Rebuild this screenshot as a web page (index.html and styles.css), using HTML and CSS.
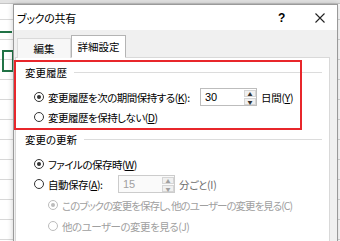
FILE: index.html
```html
<!DOCTYPE html>
<html lang="ja">
<head>
    <meta charset="UTF-8">
    <title>ブックの共有</title>
    <link rel="stylesheet" href="styles.css">
</head>
<body>
    <!-- 背景のシート -->
    <div class="sheet">
        <div class="sheet-top"></div>
        <div class="sheet-row-mark"></div>
        <div class="sheet-cell-sel"></div>
    </div>

    <!-- ダイアログ -->
    <div class="dialog">
        <div class="titlebar">
            <span class="title">ブックの共有</span>
            <span class="help">?</span>
            <span class="close">
                <svg width="10" height="10" viewBox="0 0 10 10">
                    <path d="M0.5 0.5 L9.5 9.5 M9.5 0.5 L0.5 9.5" stroke="#222" stroke-width="1.1" fill="none"/>
                </svg>
            </span>
        </div>

        <div class="dialog-body">
            <div class="tabs">
                <div class="tab">編集</div>
                <div class="tab active">詳細設定</div>
            </div>

            <div class="panel">
                <!-- 変更履歴 -->
                <div class="group-title"><span>変更履歴</span></div>
                <div class="row row-first">
                    <span class="radio checked"></span>
                    <span class="label w-keep">変更履歴を次の期間保持する(<u>K</u>):</span>
                    <span class="spin">
                        <span class="spin-value">30</span>
                        <span class="spin-btns">
                            <span class="spin-btn">▲</span>
                            <span class="spin-btn">▼</span>
                        </span>
                    </span>
                    <span class="after">日間(<u>Y</u>)</span>
                </div>
                <div class="row">
                    <span class="radio"></span>
                    <span class="label">変更履歴を保持しない(<u>D</u>)</span>
                </div>

                <!-- 変更の更新 -->
                <div class="group-title group-gap"><span>変更の更新</span></div>
                <div class="row row-first">
                    <span class="radio checked"></span>
                    <span class="label">ファイルの保存時(<u>W</u>)</span>
                </div>
                <div class="row">
                    <span class="radio"></span>
                    <span class="label w-auto">自動保存(<u>A</u>):</span>
                    <span class="spin disabled">
                        <span class="spin-value">15</span>
                        <span class="spin-btns">
                            <span class="spin-btn">▲</span>
                            <span class="spin-btn">▼</span>
                        </span>
                    </span>
                    <span class="after dim">分ごと(I)</span>
                </div>
                <div class="row sub">
                    <span class="radio checked off"></span>
                    <span class="label off tight">このブックの変更を保存し、他のユーザーの変更を見る(C)</span>
                </div>
                <div class="row sub">
                    <span class="radio off"></span>
                    <span class="label off">他のユーザーの変更を見る(J)</span>
                </div>

                <!-- 変更の競合 -->
                <div class="group-title group-last"><span>変更の競合</span></div>
            </div>
        </div>
    </div>

    <!-- 赤枠 -->
    <div class="mark-box"></div>
</body>
</html>
```

FILE: styles.css
```css
* {
    margin: 0;
    padding: 0;
    box-sizing: border-box;
}

body {
    width: 340px;
    height: 241px;
    overflow: hidden;
    position: relative;
    font-family: "Noto Sans CJK JP", "Noto Sans", sans-serif;
    font-size: 10.5px;
    font-feature-settings: "palt";
    white-space: nowrap;
    color: #000;
    background: #fff;
}

/* 背景のシート */
.sheet {
    position: absolute;
    inset: 0;
    background:
        repeating-linear-gradient(to bottom, transparent 0 19px, #d8d8d8 19px 20px),
        #fff;
}

.sheet-top {
    height: 4px;
    background: #e3e3e3;
    border-bottom: 1px solid #c6c6c6;
}

.sheet-row-mark {
    position: absolute;
    left: 0;
    top: 31px;
    width: 12px;
    height: 2px;
    background: #217346;
}

.sheet-cell-sel {
    position: absolute;
    left: 2px;
    top: 50px;
    width: 12px;
    height: 22px;
    border: 2px solid #217346;
}

/* ダイアログ */
.dialog {
    position: absolute;
    left: 13px;
    top: 4px;
    width: 325px;
    height: 240px;
    border: 1px solid #9a9a9a;
    border-bottom: none;
    background: #f0f0f0;
    box-shadow: 0 0 6px rgba(0,0,0,0.2);
}

.titlebar {
    height: 25px;
    background: #fff;
    display: flex;
    align-items: center;
    padding-left: 3px;
}

.title {
    font-size: 11px;
    letter-spacing: -0.3px;
    flex: 1;
}

.help {
    width: 8px;
    font-family: "Liberation Sans", sans-serif;
    font-size: 12px;
    font-weight: bold;
    margin-right: 29px;
}

.close {
    display: flex;
    margin-right: 12px;
}

.dialog-body {
    padding: 5px 7px 0 1px;
}

.tabs {
    display: flex;
    align-items: flex-end;
    padding-left: 2px;
    height: 23px;
    position: relative;
    z-index: 1;
}

.tab {
    width: 54px;
    height: 20px;
    text-align: center;
    line-height: 20px;
    background: #f7f7f7;
    border: 1px solid #dadada;
    border-bottom: none;
}

.tab.active {
    width: 55px;
    height: 23px;
    line-height: 22px;
    background: #fff;
    border-color: #b4b4b4;
    border-bottom: 1px solid #fff;
}

.panel {
    background: #fff;
    border: 1px solid #d9d9d9;
    margin-top: -1px;
    height: 200px;
    padding: 6px 7px 0 9px;
}

/* グループ見出し */
.group-title {
    display: flex;
    align-items: center;
    gap: 7px;
    height: 16px;
}

.group-title::after {
    content: "";
    flex: 1;
    height: 1px;
    background: #dcdcdc;
}

.group-gap {
    margin-top: 4px;
}

.group-last {
    margin-top: 3px;
}

/* ラジオ行 */
.row {
    display: flex;
    align-items: center;
    height: 20px;
    padding-left: 9px;
}

.row-first {
    margin-top: 7px;
}

.row.sub {
    padding-left: 23px;
    height: 20px;
    margin-top: 1px;
}

.radio {
    width: 10px;
    height: 10px;
    border: 1px solid #333;
    border-radius: 50%;
    margin-right: 4px;
    position: relative;
    flex: none;
}

.radio.checked::after {
    content: "";
    position: absolute;
    left: 2px;
    top: 2px;
    width: 4px;
    height: 4px;
    border-radius: 50%;
    background: #333;
}

.radio.off {
    border-color: #bcbcbc;
}

.radio.off::after {
    background: #bcbcbc;
}

.label {
    letter-spacing: -0.5px;
}

.label.off {
    color: #a0a0a0;
}

.label.tight {
    letter-spacing: -1px;
}

.w-keep {
    width: 152px;
    flex: none;
}

.w-auto {
    width: 70px;
    flex: none;
}

/* スピンボックス */
.spin {
    display: flex;
    width: 57px;
    height: 18px;
    border: 1px solid #bdbdbd;
    background: #fff;
    flex: none;
}

.spin-value {
    flex: 1;
    padding-left: 4px;
    line-height: 16px;
    font-family: "Liberation Sans", sans-serif;
    font-size: 11px;
}

.spin-btns {
    width: 13px;
    display: flex;
    flex-direction: column;
    gap: 1px;
    padding: 1px 0 1px 1px;
}

.spin-btn {
    flex: 1;
    background: #f0f0f0;
    border: 1px solid #d5d5d5;
    font-size: 5px;
    line-height: 5px;
    text-align: center;
    color: #333;
}

.spin.disabled {
    border-color: #cccccc;
    background: #fafafa;
}

.spin.disabled .spin-value {
    color: #a0a0a0;
}

.spin.disabled .spin-btn {
    color: #a0a0a0;
}

.after {
    margin-left: 4px;
    letter-spacing: -0.3px;
}

.after.dim {
    color: #6d6d6d;
}

/* 赤枠 */
.mark-box {
    position: absolute;
    left: 14px;
    top: 60px;
    width: 288px;
    height: 70px;
    border: 2px solid #e8262b;
}
```
